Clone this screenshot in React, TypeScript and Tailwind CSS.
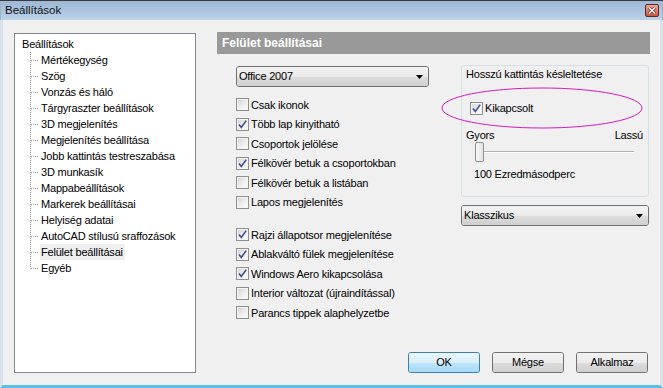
import React from 'react';

const tree = [
  'Mértékegység',
  'Szög',
  'Vonzás és háló',
  'Tárgyraszter beállítások',
  '3D megjelenítés',
  'Megjelenítés beállítása',
  'Jobb kattintás testreszabása',
  '3D munkasík',
  'Mappabeállítások',
  'Markerek beállításai',
  'Helyiség adatai',
  'AutoCAD stílusú sraffozások',
  'Felület beállításai',
  'Egyéb',
];

const group1 = [
  { label: 'Csak ikonok', on: false },
  { label: 'Több lap kinyitható', on: true },
  { label: 'Csoportok jelölése', on: false },
  { label: 'Félkövér betuk a csoportokban', on: true },
  { label: 'Félkövér betuk a listában', on: false },
  { label: 'Lapos megjelenítés', on: false },
];

const group2 = [
  { label: 'Rajzi állapotsor megjelenítése', on: true },
  { label: 'Ablakváltó fülek megjelenítése', on: true },
  { label: 'Windows Aero kikapcsolása', on: true },
  { label: 'Interior változat (újraindítással)', on: false },
  { label: 'Parancs tippek alaphelyzetbe', on: false },
];

function CheckBox({ on }: { on: boolean }) {
  return (
    <div className="w-[13px] h-[13px] border border-[#8f8f8f] bg-[#f4f4f4] p-[1px] shrink-0">
      <div className="w-full h-full bg-gradient-to-br from-[#d6d6d6] via-[#ececec] to-[#fbfbfb] flex items-center justify-center">
        {on && (
          <svg width="9" height="9" viewBox="0 0 9 9">
            <path d="M1 4.5 L3.3 7.4 L8.2 0.6" fill="none" stroke="#3a4f8e" strokeWidth="1.6" />
          </svg>
        )}
      </div>
    </div>
  );
}

function Check({ label, on }: { label: string; on: boolean }) {
  return (
    <div className="h-[19.5px] flex items-center gap-[2px]">
      <CheckBox on={on} />
      <span className="leading-[14px]">{label}</span>
    </div>
  );
}

function Combo({ text }: { text: string }) {
  return (
    <div className="h-[21px] rounded-[3px] border border-[#707070] flex flex-col overflow-hidden relative">
      <div className="flex-1 bg-gradient-to-b from-[#f2f2f2] to-[#ebebeb]" />
      <div className="flex-1 bg-gradient-to-b from-[#dddddd] to-[#cfcfcf]" />
      <div className="absolute inset-0 flex items-center justify-between pl-[2px] pr-[5px]">
        <span>{text}</span>
        <svg width="7" height="4" viewBox="0 0 7 4">
          <polygon points="0,0 7,0 3.5,4" fill="#000" />
        </svg>
      </div>
    </div>
  );
}

function Button({ text, primary }: { text: string; primary?: boolean }) {
  return (
    <div
      className={
        'w-[72px] h-[21px] rounded-[3px] border flex flex-col overflow-hidden relative ' +
        (primary ? 'border-[#3c7fb1] shadow-[inset_0_0_0_1px_#9fd5f5]' : 'border-[#707070]')
      }
    >
      {primary ? (
        <>
          <div className="flex-1 bg-gradient-to-b from-[#eaf6fd] to-[#d9f0fc]" />
          <div className="flex-1 bg-gradient-to-b from-[#bee6fd] to-[#a7d9f5]" />
        </>
      ) : (
        <>
          <div className="flex-1 bg-gradient-to-b from-[#f2f2f2] to-[#ebebeb]" />
          <div className="flex-1 bg-gradient-to-b from-[#dddddd] to-[#cfcfcf]" />
        </>
      )}
      <div className="absolute inset-0 flex items-center justify-center">{text}</div>
    </div>
  );
}

function TreeLine({ last }: { last: boolean }) {
  return (
    <svg width="10" height="16" viewBox="0 0 10 16" className="shrink-0">
      <path d={last ? 'M0.5 0 V8.5' : 'M0.5 0 V16'} stroke="#a0a0a0" strokeDasharray="1 1" />
      <path d="M1 8.5 H9" stroke="#a0a0a0" strokeDasharray="1 1" />
    </svg>
  );
}

export default function App() {
  return (
    <div className="w-[663px] h-[388px] flex flex-col bg-[#f0f0f0] border-t border-[#3a3a3a] text-[11px] tracking-[-0.2px] text-black font-['Liberation_Sans',Arial,sans-serif] overflow-hidden">
      {/* Címsor */}
      <div className="h-[19px] shrink-0 bg-gradient-to-b from-[#9db7d5] to-[#bcd3eb] flex items-center justify-between pl-[4px] pr-[3px] border-x border-[#9fb5cc]">
        <span className="text-[11.5px] tracking-normal text-[#111]">Beállítások</span>
        <div className="w-[14px] h-[13px] rounded-[2px] border border-[#5e2626] bg-gradient-to-b from-[#e9a795] to-[#c9513e] flex items-center justify-center">
          <svg width="8" height="7" viewBox="0 0 8 7">
            <path d="M1 0.5 L7 6.5 M7 0.5 L1 6.5" stroke="#4a1a1a" strokeWidth="2.6" />
            <path d="M1 0.5 L7 6.5 M7 0.5 L1 6.5" stroke="#fff" strokeWidth="1.5" />
          </svg>
        </div>
      </div>

      {/* Törzs */}
      <div className="flex-1 flex border-x-[3px] border-[#d6e1ec] border-b-[3px] border-b-[#5cbfea]">
        {/* Fa nézet */}
        <div className="ml-[11px] mt-[13px] mb-[12px] w-[182px] border border-[#828790] bg-white pt-[2px]">
          <div className="h-[16px] flex items-center pl-[7px]">Beállítások</div>
          <div className="pl-[15px]">
            {tree.map((t, i) => (
              <div key={t} className="h-[16px] flex items-center">
                <TreeLine last={i === tree.length - 1} />
                <span
                  className={
                    'leading-[16px] pl-[1px] pr-[2px] ' + (t === 'Felület beállításai' ? 'bg-[#efefef]' : '')
                  }
                >
                  {t}
                </span>
              </div>
            ))}
          </div>
        </div>

        {/* Jobb oldal */}
        <div className="ml-[21px] w-[433px] flex flex-col pt-[12px] pb-[12px]">
          <div className="h-[22px] bg-[#999999] flex items-center pl-[5px] text-white font-bold text-[12px] tracking-normal">
            Felület beállításai
          </div>

          <div className="flex">
            <div className="ml-[19px] w-[193px] pt-[12px]">
              <Combo text="Office 2007" />
              <div className="mt-[8px]">
                {group1.map((c) => (
                  <Check key={c.label} {...c} />
                ))}
              </div>
              <div className="mt-[13px]">
                {group2.map((c) => (
                  <Check key={c.label} {...c} />
                ))}
              </div>
            </div>

            <div className="ml-[32px] w-[188px] pt-[11px]">
              <div className="relative h-[132px] border border-[#d5dfe5] rounded-[3px] flex flex-col">
                <div className="mt-[1px] pl-[4px] h-[14px] leading-[14px]">Hosszú kattintás késleltetése</div>
                <div className="mt-[19px] h-[16px] pl-[8px] flex items-center gap-[2px]">
                  <CheckBox on />
                  <span>Kikapcsolt</span>
                </div>
                <div className="mt-[12px] h-[14px] leading-[14px] pl-[4px] pr-[5px] flex justify-between">
                  <span>Gyors</span>
                  <span>Lassú</span>
                </div>
                <div className="h-[20px] pl-[13px] pr-[14px] flex items-center">
                  <div className="w-[9px] h-[20px] rounded-[2px] border border-[#8e8f8f] bg-gradient-to-r from-[#f7f7f7] to-[#e4e4e4] shrink-0" />
                  <div className="flex-1 h-[2px] border-t border-[#b0b0b0] border-b border-b-white" />
                </div>
                <div className="mt-[5px] h-[14px] leading-[14px] pl-[12px]">100 Ezredmásodperc</div>

                <svg
                  className="absolute left-[-21px] top-[21px] pointer-events-none"
                  width="202"
                  height="42"
                  viewBox="0 0 202 42"
                >
                  <ellipse cx="101" cy="21" rx="100" ry="20" fill="none" stroke="#d61bb8" strokeWidth="1" />
                </svg>
              </div>
              <div className="mt-[8px]">
                <Combo text="Klasszikus" />
              </div>
            </div>
          </div>

          <div className="mt-auto flex justify-end gap-[12px] pr-[2px]">
            <Button text="OK" primary />
            <Button text="Mégse" />
            <Button text="Alkalmaz" />
          </div>
        </div>
      </div>
    </div>
  );
}
